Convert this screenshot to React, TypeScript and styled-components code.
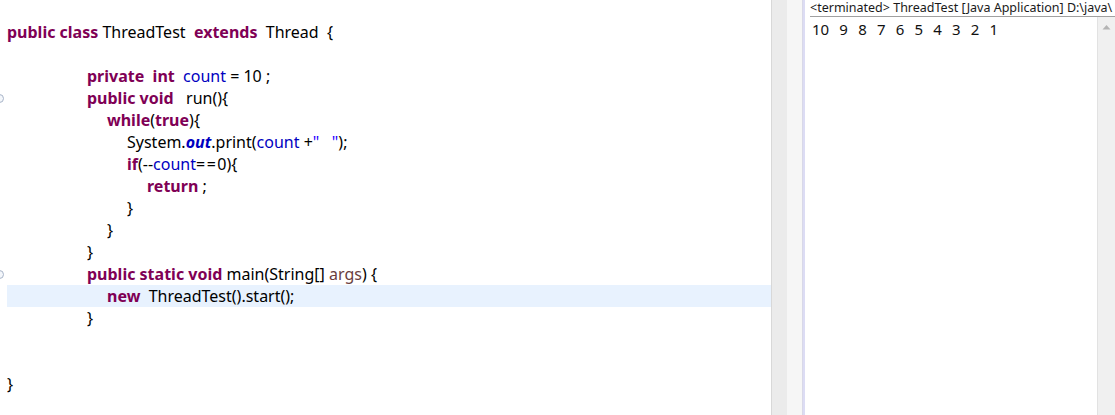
import React from 'react';
import styled, { createGlobalStyle } from 'styled-components';

const GlobalStyle = createGlobalStyle`
  html, body {
    margin: 0;
    padding: 0;
    background: #ffffff;
  }
`;

const Screen = styled.div`
  display: flex;
  width: 1115px;
  height: 415px;
  overflow: hidden;
  background: #ffffff;
`;

const Editor = styled.div`
  width: 771px;
  flex: none;
  padding-top: 21px;
  font-family: 'Noto Sans', 'Open Sans', sans-serif;
  font-size: 16px;
  color: #000000;
`;

const Line = styled.div<{ $indent: number; $current?: boolean }>`
  position: relative;
  height: 22px;
  line-height: 22px;
  margin-left: 7px;
  padding-left: ${(p) => p.$indent * 20}px;
  white-space: pre;
  background: ${(p) => (p.$current ? '#e8f2fe' : 'transparent')};
`;

const Fold = styled.span`
  position: absolute;
  left: -12px;
  top: 7px;
  width: 7px;
  height: 7px;
  border: 1px solid #a8b4c8;
  border-radius: 50%;
  background: #f4f7fb;
`;

const Kw = styled.span`
  color: #7f0055;
  font-weight: bold;
`;

const Field = styled.span<{ $static?: boolean }>`
  color: #0000c0;
  font-weight: ${(p) => (p.$static ? 'bold' : 'normal')};
  font-style: ${(p) => (p.$static ? 'italic' : 'normal')};
`;

const Op = styled.span`
  letter-spacing: 1.5px;
`;

const Param = styled.span`
  color: #6a3e3e;
`;

const Str = styled.span`
  color: #2a00ff;
`;

const Divider = styled.div`
  display: flex;
  flex: none;
  border-left: 1px solid #d8d8d8;
`;

const Strip = styled.div<{ $tone: string }>`
  width: 15px;
  background: ${(p) => p.$tone};
`;

const Console = styled.div`
  flex: 1;
  display: flex;
  flex-direction: column;
  border-left: 1px solid #d8d8e8;
  box-shadow: inset 2px 0 0 #dcdcf4;
  min-width: 0;
`;

const Header = styled.div`
  margin: 0 0 0 7px;
  height: 16px;
  border-bottom: 1px solid #a0a0a0;
  font-family: 'Noto Sans', 'Open Sans', sans-serif;
  font-size: 12.5px;
  line-height: 15px;
  color: #1a1a1a;
  white-space: nowrap;
  overflow: hidden;
`;

const Body = styled.div`
  flex: 1;
  display: flex;
`;

const Output = styled.div`
  flex: 1;
  padding: 2px 0 0 9px;
  font-family: 'Noto Sans', 'Open Sans', sans-serif;
  font-size: 15px;
  line-height: 20px;
  color: #111111;
  word-spacing: 1.2px;
  white-space: pre;
`;

const Scrollbar = styled.div`
  width: 17px;
  flex: none;
  background: #f0f0f0;
  border-left: 1px solid #e2e2e2;
  display: flex;
  justify-content: center;
  padding-top: 7px;
`;

const App: React.FC = () => {
  return (
    <>
      <GlobalStyle />
      <Screen>
        <Editor>
          <Line $indent={0}>
            <Kw>public class</Kw> ThreadTest  <Kw>extends</Kw>  Thread  {'{'}
          </Line>
          <Line $indent={0}> </Line>
          <Line $indent={4}>
            <Kw>private</Kw>  <Kw>int</Kw>  <Field>count</Field> = 10 ;
          </Line>
          <Line $indent={4}>
            <Fold />
            <Kw>public void</Kw>   run(){'{'}
          </Line>
          <Line $indent={5}>
            <Kw>while</Kw>(<Kw>true</Kw>){'{'}
          </Line>
          <Line $indent={6}>
            System.<Field $static>out</Field>.print(<Field>count</Field> +<Str>"   "</Str>);
          </Line>
          <Line $indent={6}>
            <Kw>if</Kw>(--<Field>count</Field><Op>==</Op>0){'{'}
          </Line>
          <Line $indent={7}>
            <Kw>return</Kw> ;
          </Line>
          <Line $indent={6}>{'}'}</Line>
          <Line $indent={5}>{'}'}</Line>
          <Line $indent={4}>{'}'}</Line>
          <Line $indent={4}>
            <Fold />
            <Kw>public static void</Kw> main(String[] <Param>args</Param>) {'{'}
          </Line>
          <Line $indent={5} $current>
            <Kw>new</Kw>  ThreadTest().start();
          </Line>
          <Line $indent={4}>{'}'}</Line>
          <Line $indent={0}> </Line>
          <Line $indent={0}> </Line>
          <Line $indent={0}>{'}'}</Line>
        </Editor>
        <Divider>
          <Strip $tone="#ebebeb" />
          <Strip $tone="#f6f6f6" />
        </Divider>
        <Console>
          <Header>{'<terminated> ThreadTest [Java Application] D:\\java\\'}</Header>
          <Body>
            <Output>10  9  8  7  6  5  4  3  2  1</Output>
            <Scrollbar>
              <svg width="9" height="6" viewBox="0 0 9 6">
                <path d="M0.5 5.5 L4.5 1 L8.5 5.5 Z" fill="#b4b4b4" />
              </svg>
            </Scrollbar>
          </Body>
        </Console>
      </Screen>
    </>
  );
};

export default App;
